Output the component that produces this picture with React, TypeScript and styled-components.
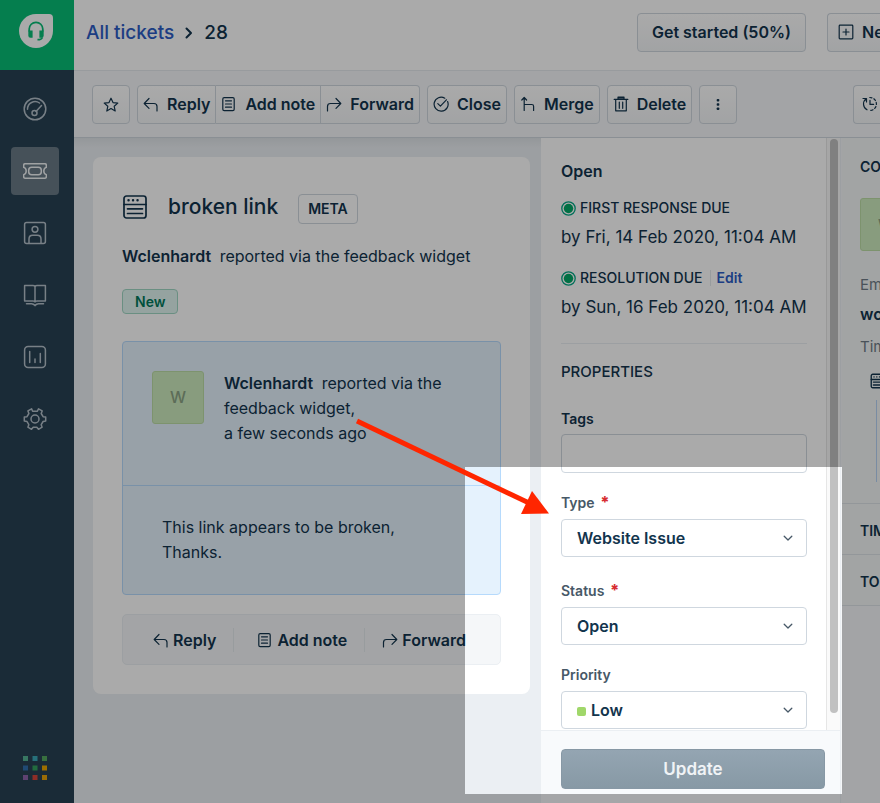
import React from "react";
import styled, { createGlobalStyle, css } from "styled-components";

const ink = "#12344d";
const line = "#cfd7df";

const GlobalStyle = createGlobalStyle`
  *, *::before, *::after { box-sizing: border-box; }
  body {
    margin: 0;
    color: ${ink};
    font-family: Inter, "Liberation Sans", sans-serif;
    font-size: 16px;
    line-height: 24px;
  }
  button, input, select { font: inherit; color: inherit; }
  h1, h2, p { margin: 0; }
  svg { flex: none; }
`;

const Screen = styled.div`
  position: relative;
  display: flex;
  height: 100vh;
  min-height: 803px;
  overflow: hidden;
  background: #ebeff3;
`;

/* Sidebar */
const Sidebar = styled.nav`
  flex: 0 0 74px;
  display: flex;
  flex-direction: column;
  background: #284153;
`;
const Brand = styled.a`
  height: 70px;
  padding: 14px 0 0 19px;
  background: #08bd76;
`;
const NavList = styled.div`
  flex: 1;
  display: flex;
  flex-direction: column;
  gap: 14px;
  padding: 15px 11px 0;
`;
const NavButton = styled.button<{ $active?: boolean }>`
  display: grid;
  place-items: center;
  width: 48px;
  height: 48px;
  padding: 0;
  border: 0;
  border-radius: 4px;
  color: ${(p) => (p.$active ? "#f0f3f5" : "#b4c0ca")};
  background: ${(p) => (p.$active ? "#697a86" : "transparent")};
`;
const AppSwitcher = styled.button`
  margin: 0 0 23px 23px;
  padding: 0;
  border: 0;
  width: 24px;
  height: 24px;
  background: transparent;
  svg { display: block; }
`;

/* Header and toolbar */
const Page = styled.div`
  flex: 1;
  min-width: 0;
  display: flex;
  flex-direction: column;
`;
const buttonLook = css`
  display: flex;
  align-items: center;
  flex: none;
  height: 39px;
  border: 1px solid ${line};
  background: linear-gradient(#ffffff, #f3f5f7);
  font-weight: 600;
  white-space: nowrap;
`;
const Header = styled.header`
  flex: 0 0 70px;
  display: flex;
  align-items: center;
  gap: 21px;
  padding: 0 0 6px 12px;
  overflow: hidden;
  background: #fff;
`;
const Crumbs = styled.div`
  flex: 1;
  display: flex;
  align-items: center;
  gap: 9px;
  padding-top: 1px;
  font-size: 19px;
  font-weight: 500;
  a { color: #2c5cc5; text-decoration: none; }
`;
const HeaderButton = styled.button`
  ${buttonLook}
  gap: 8px;
  padding: 0 14px;
  border-radius: 4px;
`;
const NewButton = styled(HeaderButton)`
  flex: 0 0 53px;
  justify-content: flex-start;
  padding: 0 0 0 10px;
  border-right: 0;
  border-radius: 4px 0 0 4px;
  overflow: hidden;
`;
const Toolbar = styled.div`
  flex: 0 0 68px;
  display: flex;
  align-items: center;
  gap: 7px;
  padding: 0 0 0 18px;
  overflow: hidden;
  background: #f5f7f9;
  border-top: 1px solid #e4e9ed;
  border-bottom: 1px solid ${line};
`;
const ToolButton = styled.button<{ $square?: boolean }>`
  ${buttonLook}
  justify-content: center;
  gap: 8px;
  width: ${(p) => (p.$square ? "38px" : "auto")};
  padding: ${(p) => (p.$square ? "0" : "0 5px")};
  border-radius: 4px;
`;
const ToolGroup = styled.div`
  display: flex;
  ${ToolButton} { border-radius: 0; }
  ${ToolButton} + ${ToolButton} { border-left: 0; }
  ${ToolButton}:first-child { border-radius: 4px 0 0 4px; }
  ${ToolButton}:last-child { border-radius: 0 4px 4px 0; }
`;
const ActivityButton = styled(ToolButton)`
  flex: 0 0 27px;
  margin-left: auto;
  padding: 0 0 0 5px;
  border-right: 0;
  border-radius: 4px 0 0 4px;
`;

/* Body */
const Body = styled.div`
  flex: 1;
  min-height: 0;
  display: grid;
  grid-template-columns: minmax(0, 1fr) 300px 39px;
  background: #ebeff3;
`;
const Conversation = styled.main`
  padding: 19px 11px 19px 19px;
  background: linear-gradient(#dfe4e8, #ebeff3 10px);
`;
const Card = styled.section`
  padding: 29px;
  border-radius: 8px;
  background: #fff;
`;
const TitleRow = styled.div`
  display: flex;
  align-items: center;
  gap: 20px;
  padding-top: 4px;
  h1 { font-size: 21px; font-weight: 500; line-height: 30px; }
`;
const MetaButton = styled.button`
  height: 30px;
  margin-top: 4px;
  padding: 0 9px;
  border: 1px solid ${line};
  border-radius: 4px;
  background: #fff;
  font-size: 14px;
  font-weight: 600;
`;
const Byline = styled.p`
  margin-top: 20px;
  strong { margin-right: 4px; font-weight: 600; }
`;
const Badge = styled.span`
  display: inline-block;
  margin-top: 21px;
  padding: 0 12px;
  border: 1px solid #a0d7c4;
  border-radius: 4px;
  background: #e0f5f1;
  color: #00795b;
  font-size: 14px;
  font-weight: 600;
  line-height: 23px;
`;
const Message = styled.article`
  margin-top: 27px;
  border: 1px solid #b6dafc;
  border-radius: 4px;
  background: #e5f2fd;
  line-height: 25px;
`;
const MessageHead = styled.div`
  display: flex;
  gap: 20px;
  height: 144px;
  padding: 29px;
  border-bottom: 1px solid #b6dafc;
  strong { margin-right: 4px; font-weight: 600; }
`;
const Avatar = styled.div`
  flex: none;
  display: grid;
  place-items: center;
  width: 52px;
  height: 53px;
  border: 1px solid #bcdda6;
  border-radius: 3px;
  background: #cdebbd;
  color: #8ba384;
  font-weight: 500;
`;
const MessageBody = styled.p`
  padding: 29px 39px;
`;
const ReplyBar = styled.div`
  display: flex;
  align-items: center;
  height: 51px;
  margin-top: 19px;
  padding-left: 13px;
  border: 1px solid #ebeff3;
  border-radius: 5px;
  background: #f5f7f9;
`;
const ReplyAction = styled.button`
  display: flex;
  align-items: center;
  gap: 4px;
  padding: 0 17px;
  border: 0;
  background: transparent;
  font-weight: 600;
  white-space: nowrap;
  & + & { border-left: 1px solid #e5eaee; }
  &:nth-child(2) { padding-left: 23px; }
`;

/* Properties */
const Side = styled.aside`
  display: flex;
  flex-direction: column;
  min-height: 0;
  border-right: 1px solid #ebeff3;
  background: #fff;
`;
const SideScroll = styled.div`
  flex: 1;
  min-height: 0;
  display: flex;
  overflow: hidden;
`;
const SideContent = styled.div`
  flex: 1;
  padding: 21px 19px 0 20px;
`;
const Track = styled.div`
  flex: 0 0 14px;
  padding: 1px 2px 17px 3px;
  border-left: 1px solid #e6e6e6;
  background: #fafafa;
`;
const Thumb = styled.div`
  height: 100%;
  border-radius: 4px;
  background: #c1c1c1;
`;
const Status = styled.h2`
  margin-bottom: 13px;
  font-size: 16px;
  font-weight: 600;
`;
const Due = styled.div`
  & + & { margin-top: 17px; }
`;
const DueTitle = styled.div`
  display: flex;
  align-items: center;
  gap: 4px;
  margin-bottom: 5px;
  font-size: 14px;
  font-weight: 500;
  white-space: nowrap;
  line-height: 24px;
  a {
    margin-left: 3px;
    padding-left: 6px;
    border-left: 1px solid #e5eaee;
    color: #2c5cc5;
    font-weight: 600;
    line-height: 16px;
    text-decoration: none;
  }
`;
const DueDate = styled.p`
  font-size: 17px;
  white-space: nowrap;
`;
const SectionTitle = styled.h2`
  margin: 24px 0 0;
  padding-top: 18px;
  border-top: 1px solid #ebeff3;
  font-size: 15px;
  font-weight: 500;
  line-height: 20px;
`;
const Field = styled.div<{ $top: number }>`
  margin-top: ${(p) => p.$top}px;
`;
const Label = styled.label<{ $strong?: boolean }>`
  display: block;
  margin-bottom: ${(p) => (p.$strong ? 5 : 6)}px;
  color: ${(p) => (p.$strong ? ink : "#475867")};
  font-size: 14px;
  font-weight: 600;
  line-height: 20px;
`;
const Required = styled.span`
  margin-left: 2px;
  color: #d72d30;
  font-size: 16px;
  font-weight: 800;
  line-height: 16px;
`;
const TextInput = styled.input`
  display: block;
  width: 100%;
  height: 39px;
  border: 1px solid ${line};
  border-radius: 4px;
  background: #fff;
`;
const SelectBox = styled.div`
  display: flex;
  align-items: center;
  height: 38px;
  padding: 0 12px 0 15px;
  border: 1px solid ${line};
  border-radius: 4px;
  background: #fff;
`;
const Select = styled.select`
  flex: 1;
  min-width: 0;
  padding: 0;
  border: 0;
  appearance: none;
  background: transparent;
  font-weight: 600;
`;
const PriorityDot = styled.span`
  width: 9px;
  height: 9px;
  margin: 2px 5px 0 0;
  border-radius: 2px;
  background: #a0d76a;
`;
const SideFooter = styled.footer`
  flex: 0 0 73px;
  padding: 18px 15px 0 20px;
  border-top: 1px solid #ebeff3;
  background: #f8fafc;
`;
const UpdateButton = styled.button`
  width: 100%;
  height: 40px;
  border: 1px solid #8798a5;
  border-radius: 4px;
  background: linear-gradient(#94a5b2, #8799a5);
  color: #f0f3f6;
  font-size: 17px;
  font-weight: 600;
`;

/* Contact */
const Contact = styled.aside`
  overflow: hidden;
  padding-left: 1px;
  background: #f5f7f9;
`;
const ContactPanel = styled.div`
  height: 365px;
  padding: 17px 0 0 18px;
  background: #f3f7f6;
  white-space: nowrap;
`;
const ContactTitle = styled.h2`
  font-size: 14px;
  font-weight: 600;
`;
const ContactAvatar = styled(Avatar)`
  margin: 19px 0 22px;
`;
const Muted = styled.p`
  color: #6f7c87;
  font-size: 15px;
`;
const Email = styled.p`
  margin: 5px 0 9px;
  font-weight: 600;
`;
const Timeline = styled.div`
  padding: 14px 0 0 10px;
  svg { display: block; }
`;
const TimelineLine = styled.div`
  height: 82px;
  margin: 11px 0 0 6px;
  border-left: 1px solid #b6d3f5;
`;
const Accordion = styled.button`
  display: block;
  width: 100%;
  height: 51px;
  padding: 3px 0 0 18px;
  border: 0;
  border-top: 1px solid #dde3e8;
  background: #f3f7f6;
  font-size: 14px;
  font-weight: 600;
  text-align: left;
  white-space: nowrap;
  overflow: hidden;
  &:last-child { border-bottom: 1px solid #dde3e8; height: 52px; }
`;

/* Highlight over the screen */
const Spotlight = styled.div`
  position: absolute;
  top: 467px;
  left: 465px;
  width: 377px;
  height: 327px;
  box-shadow: 0 0 0 4000px rgba(0, 0, 0, 0.333);
  pointer-events: none;
`;
const Arrow = styled.svg`
  position: absolute;
  top: 410px;
  left: 350px;
  pointer-events: none;
`;

type IconProps = { size?: number; box?: number; width?: number; children: React.ReactNode };
const Icon = ({ size = 16, box = 16, width = 1.2, children }: IconProps) => (
  <svg width={size} height={size} viewBox={`0 0 ${box} ${box}`} fill="none" stroke="currentColor"
    strokeWidth={width} strokeLinecap="round" strokeLinejoin="round" aria-hidden="true">{children}</svg>
);

const ReplyIcon = () => <Icon><path d="M6 2.500 1.200 7.500 6 12.300M1.500 7.500H11q3 0 3 3V15" /></Icon>;
const ForwardIcon = () => <Icon><path d="m10 2.500 4.800 5L10 12.300M14.500 7.500H4.500q-3 0-3 3V15" /></Icon>;
const NoteIcon = () => (
  <Icon><rect x="1.800" y="1.600" width="11.400" height="13" rx="1.400" /><path d="M4.500 4.800h6M4.500 8h6M4.500 11.200h6" /></Icon>
);
const StarIcon = () => <Icon><path d="m8 2.200 2 4.400 4.800.5-3.600 3.200 1 4.700L8 12.600 3.800 15l1-4.700L1.200 7.100 6 6.600Z" /></Icon>;
const CloseIcon = () => <Icon><path d="M14.600 5.500A7 7 0 1 1 11.800 2.200M4.800 7.600l2.600 2.500 6-6.300" /></Icon>;
const MergeIcon = () => <Icon><path d="M1.800 4 4.200 1.500 6.600 4M4.200 1.800v12.700M4.200 8.500h7.600q1.800 0 1.800 1.800v4.200" /></Icon>;
const TrashIcon = () => <Icon><path d="M1.200 3.400h13.600M5 3V1h6v2M5 1.800h6M2.700 3.500v11.300h10.600V3.500M6.300 6v6.300M9.700 6v6.300" /></Icon>;
const DotsIcon = () => (
  <Icon><g fill="currentColor" stroke="none"><rect x="6.700" y="3" width="2.600" height="2.600" rx=".8" /><rect x="6.700" y="7.200" width="2.600" height="2.600" rx=".8" /><rect x="6.700" y="11.400" width="2.600" height="2.600" rx=".8" /></g></Icon>
);
const PlusBoxIcon = () => <Icon><rect x="1.200" y="1.200" width="13.600" height="13.600" rx=".8" /><path d="M8 5v6M5 8h6" /></Icon>;
const HistoryIcon = () => (
  <Icon><path d="M4.200 2.800A6.500 6.500 0 0 0 5 13.800M1 2.500h3.500V6M8 4.400v4h3.600" /><path d="M7.800 1.500a6.500 6.500 0 0 1 .2 13" strokeDasharray="2.200 2" /></Icon>
);
const ChevronDown = () => <Icon size={12} box={12} width={1.3}><path d="m2.200 4.200 3.800 3.800 3.800-3.800" stroke="#475867" /></Icon>;
const FormIcon = ({ size = 26 }: { size?: number }) => (
  <Icon size={size} box={26} width={size < 20 ? 2.2 : 1.7}>
    <rect x="2" y="2" width="22" height="22" rx="2.500" /><path d="M2 10.500h22M5.500 14.800h15M5.500 19.500h15" />
    <path d="M6.500 6.300h.1M11 6.300h.1M15.500 6.300h.1" strokeWidth="2.400" />
  </Icon>
);
const DueIcon = () => (
  <svg width="15" height="15" viewBox="0 0 15 15" aria-hidden="true"><circle cx="7.500" cy="7.500" r="6.700" fill="none" stroke="#00a886" strokeWidth="1.300" /><circle cx="7.500" cy="7.500" r="4.700" fill="#00a866" /></svg>
);

const navItems = [
  { name: "Dashboard", art: <><circle cx="12" cy="12" r="10.800" /><path d="M4.500 12.300A7.600 7.600 0 0 1 16.500 6M13 14.500l5.500-6" /><circle cx="11.500" cy="16" r="2.500" /></> },
  { name: "Tickets", active: true, art: <><path d="M2 4.800h20q1.300 0 1.300 1.200v2.400q-2.500.7-2.500 3.600t2.500 3.600V18q0 1.200-1.300 1.200H2Q.7 19.200.7 18v-2.400q2.500-.7 2.500-3.600T.7 8.400V6Q.7 4.800 2 4.800Z" /><rect x="5.700" y="8.300" width="12.600" height="7.400" rx="3" /></> },
  { name: "Contacts", art: <><rect x="1.600" y="1.600" width="20.800" height="20.800" rx="2" /><circle cx="12" cy="8.300" r="2.900" /><path d="M6 22v-4q0-3.700 3.700-3.700h4.600Q18 14.300 18 18v4" /></> },
  { name: "Solutions", art: <><path d="M1.600 2.500H10q2 0 2 1.500 0-1.500 2-1.500h8.400V18H14q-2 0-2 1 0-1-2-1H1.600ZM12 4v15M3.500 20.800h5q2 0 3.500 1.800 1.500-1.800 3.500-1.800h5" /></> },
  { name: "Analytics", art: <><rect x="1.600" y="1.600" width="20.800" height="20.800" rx="3.500" /><path d="M6.700 6.500v11M12 14v3.500M17.300 8.500v9" /></> },
  { name: "Admin", art: <><path d="m9.600 4.300-1-2.500-3.700 2.100 1 2.600-1.900 3.200-2.700.4v3.900l2.700.5 1.800 3.200-.9 2.500 3.600 2.100 1.700-2.100h3.600l1.700 2.100 3.600-2.100-.9-2.500 1.900-3.200 2.600-.5v-3.900l-2.600-.4-1.900-3.200 1-2.600-3.700-2.100-1.100 2.500Z" /><circle cx="12" cy="12" r="4" /></> },
];

const swatches = ["#55b394", "#3ba8b8", "#54a85f", "#316fae", "#34a35f", "#eba500", "#8e63aa", "#d5443b", "#e7a20b"];

const selects = [
  { id: "type", label: "Type", value: "Website Issue", required: true, top: 20 },
  { id: "status", label: "Status", value: "Open", required: true, top: 24 },
  { id: "priority", label: "Priority", value: "Low", required: false, top: 20 },
];

export default function App() {
  return (
    <>
      <GlobalStyle />
      <Screen>
        <Sidebar aria-label="Main">
          <Brand href="#" aria-label="Home">
            <svg width="34" height="34" viewBox="0 0 35 35" aria-hidden="true">
              <path d="M17.500 0H31q4 0 4 4v13.500A17.500 17.500 0 1 1 17.500 0Z" fill="#fff" />
              <path d="M10.500 18v-2.500a7 7 0 0 1 14 0V18M24 24q-.5 2.500-5 2.500" fill="none" stroke="#08bd76" strokeWidth="1.800" />
              <path d="M9.600 17H14v7.500h-2.200q-2.200 0-2.200-2.200ZM21 17h4.400v5.300q0 2.200-2.200 2.200H21Z" fill="#08bd76" />
            </svg>
          </Brand>
          <NavList>
            {navItems.map((item) => (
              <NavButton key={item.name} $active={item.active} aria-label={item.name}>
                <Icon size={24} box={24} width={1.5}>{item.art}</Icon>
              </NavButton>
            ))}
          </NavList>
          <AppSwitcher aria-label="Switch app">
            <svg width="24" height="24" viewBox="0 0 24 24">
              {swatches.map((c, i) => <rect key={c} x={(i % 3) * 9.5} y={Math.floor(i / 3) * 9.5} width="5" height="5" fill={c} />)}
            </svg>
          </AppSwitcher>
        </Sidebar>

        <Page>
          <Header>
            <Crumbs>
              <a href="#">All tickets</a>
              <Icon size={12} box={12} width={2}><path d="m3.500 1.500 4.500 4.500-4.500 4.500" /></Icon>
              <span>28</span>
            </Crumbs>
            <HeaderButton>Get started (50%)</HeaderButton>
            <NewButton><PlusBoxIcon />New</NewButton>
          </Header>

          <Toolbar>
            <ToolButton $square aria-label="Star"><StarIcon /></ToolButton>
            <ToolGroup>
              <ToolButton><ReplyIcon />Reply</ToolButton>
              <ToolButton><NoteIcon />Add note</ToolButton>
              <ToolButton><ForwardIcon />Forward</ToolButton>
            </ToolGroup>
            <ToolButton><CloseIcon />Close</ToolButton>
            <ToolButton><MergeIcon />Merge</ToolButton>
            <ToolButton><TrashIcon />Delete</ToolButton>
            <ToolButton $square aria-label="More"><DotsIcon /></ToolButton>
            <ActivityButton aria-label="Show activities"><HistoryIcon /></ActivityButton>
          </Toolbar>

          <Body>
            <Conversation>
              <Card>
                <TitleRow>
                  <FormIcon />
                  <h1>broken link</h1>
                  <MetaButton>META</MetaButton>
                </TitleRow>
                <Byline><strong>Wclenhardt</strong> reported via the feedback widget</Byline>
                <Badge>New</Badge>
                <Message>
                  <MessageHead>
                    <Avatar>W</Avatar>
                    <p><strong>Wclenhardt</strong> reported via the feedback widget,<br />a few seconds ago</p>
                  </MessageHead>
                  <MessageBody>This link appears to be broken,<br />Thanks.</MessageBody>
                </Message>
                <ReplyBar>
                  <ReplyAction><ReplyIcon />Reply</ReplyAction>
                  <ReplyAction><NoteIcon />Add note</ReplyAction>
                  <ReplyAction><ForwardIcon />Forward</ReplyAction>
                </ReplyBar>
              </Card>
            </Conversation>

            <Side>
              <SideScroll>
                <SideContent>
                  <Status>Open</Status>
                  <Due>
                    <DueTitle><DueIcon />FIRST RESPONSE DUE</DueTitle>
                    <DueDate>by Fri, 14 Feb 2020, 11:04 AM</DueDate>
                  </Due>
                  <Due>
                    <DueTitle><DueIcon />RESOLUTION DUE<a href="#">Edit</a></DueTitle>
                    <DueDate>by Sun, 16 Feb 2020, 11:04 AM</DueDate>
                  </Due>
                  <SectionTitle>PROPERTIES</SectionTitle>
                  <Field $top={27}>
                    <Label $strong htmlFor="tags">Tags</Label>
                    <TextInput id="tags" />
                  </Field>
                  {selects.map((s) => (
                    <Field key={s.id} $top={s.top}>
                      <Label htmlFor={s.id}>{s.label} {s.required && <Required>*</Required>}</Label>
                      <SelectBox>
                        {s.id === "priority" && <PriorityDot />}
                        <Select id={s.id} defaultValue={s.value}><option>{s.value}</option></Select>
                        <ChevronDown />
                      </SelectBox>
                    </Field>
                  ))}
                </SideContent>
                <Track><Thumb /></Track>
              </SideScroll>
              <SideFooter><UpdateButton>Update</UpdateButton></SideFooter>
            </Side>

            <Contact>
              <ContactPanel>
                <ContactTitle>CONTACT DETAILS</ContactTitle>
                <ContactAvatar>W</ContactAvatar>
                <Muted>Email</Muted>
                <Email>wclenhardt</Email>
                <Muted>Timeline</Muted>
                <Timeline><FormIcon size={16} /><TimelineLine /></Timeline>
              </ContactPanel>
              <Accordion>TIMELINE</Accordion>
              <Accordion>TO-DO</Accordion>
            </Contact>
          </Body>
        </Page>

        <Spotlight />
        <Arrow width="204" height="110" viewBox="0 0 204 110" aria-hidden="true">
          <path d="m7 11 171 81.500" stroke="#ff2600" strokeWidth="5" />
          <path d="m182 81 17 22.500-28 .5Z" fill="#ff2600" stroke="none" />
        </Arrow>
      </Screen>
    </>
  );
}
